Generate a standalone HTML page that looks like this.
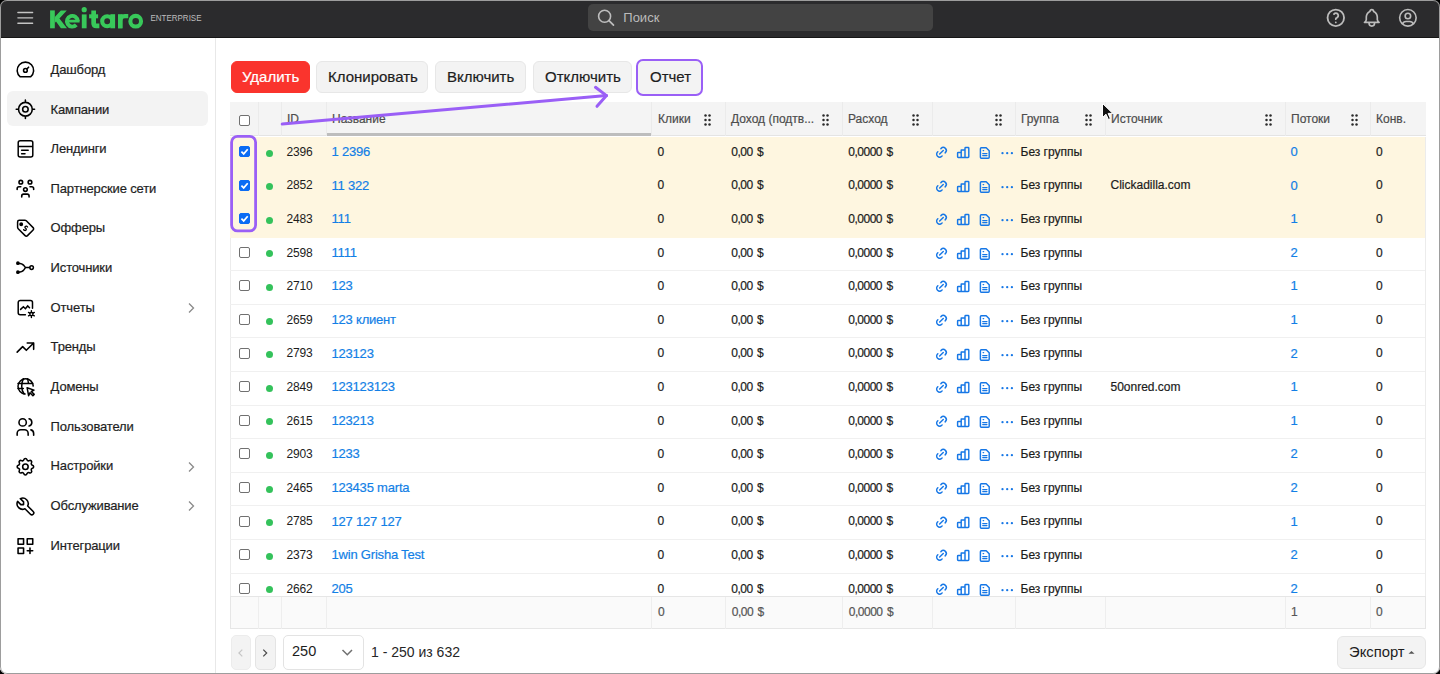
<!DOCTYPE html><html><head><meta charset="utf-8"><style>
*{box-sizing:border-box;margin:0;padding:0}
html,body{width:1440px;height:674px;overflow:hidden;background:#000;font-family:"Liberation Sans",sans-serif;color:#202020}
.mi span,.c,.th,.btn{-webkit-text-stroke:0.2px currentColor}
#win{position:absolute;left:0;top:0;width:1440px;height:674px;border-radius:7px;overflow:hidden;background:#fff}
#frame{position:absolute;left:0;top:0;width:1440px;height:674px;border:1px solid #9d9d9d;border-radius:7px}
.a{position:absolute;white-space:nowrap}
#hdr{position:absolute;left:0;top:0;width:1440px;height:37.5px;background:#2b2b2d;border-bottom:1px solid #161616}
#side{position:absolute;left:0;top:37.5px;width:216px;height:640px;background:#fff;border-right:1px solid #e8e8e8}
.mi{position:absolute;left:7.3px;width:201px;height:35.2px;border-radius:6px}
.mi.act{background:#f3f3f3}
.mi span{position:absolute;left:43.3px;top:10.4px;font-size:13px;line-height:16px;color:#1f1f1f;letter-spacing:-0.15px}
.btn{position:absolute;top:61px;height:32.4px;border-radius:6px;background:#f3f3f3;border:1px solid #e7e7e7;font-size:15px;line-height:30px;color:#1d1d1d;padding-left:11px}
.th{position:absolute;top:-0.5px;height:34px;font-size:12px;line-height:34px;color:#4d4d4d;padding-left:6px}
.row{position:absolute;left:0;width:1195px;height:33.6px;border-bottom:1px solid #f0f0f0}
.row.sel{background:#fef6e0;border-bottom-color:#fef6e0}
.c{position:absolute;top:-1.1px;height:33px;line-height:33px;font-size:12px;color:#1c1c1c;padding-left:5.5px;white-space:nowrap}
.lnk{color:#137fe6;font-size:13px;letter-spacing:-0.2px;top:-1.9px}
.dot{position:absolute;left:36px;top:12.9px;width:7px;height:7px;border-radius:50%;background:#34c25b}
.cb{position:absolute;left:9px;top:9.2px;width:11px;height:11px;border:1px solid #707070;border-radius:2px;background:#fff}
.cb.on{background:#0b6cf4;border-color:#0b6cf4}
.hd{position:absolute;width:8px;height:12px}
</style></head><body><div id="win">
<div id="hdr">
<svg class="a" style="left:0;top:0" width="220" height="38" viewBox="0 0 220 38"><g stroke="#c4c4c4" stroke-width="1.45" stroke-linecap="round"><line x1="17.9" y1="12.5" x2="32.6" y2="12.5"/><line x1="17.9" y1="17.85" x2="32.6" y2="17.85"/><line x1="17.9" y1="23.2" x2="32.6" y2="23.2"/></g><g fill="#38c85a"><rect x="50.1" y="10.4" width="4.7" height="17.9"/><path d="M54.8 16.9L60.8 10.4H66.8L59.4 18.6L67 28.3H60.9L56 21.6L54.8 22.9Z"/><rect x="81.8" y="14.4" width="4.8" height="13.9"/><circle cx="84.2" cy="9.7" r="2.6"/><rect x="89.1" y="14.3" width="9" height="4"/><rect x="110.3" y="14.2" width="4.8" height="14.1"/><rect x="118" y="14.2" width="4.5" height="14.1"/></g><g fill="none" stroke="#38c85a"><path d="M77.7 21.1A5.4 5.4 0 1 0 76.3 24.9" stroke-width="3.9"/><path d="M67.5 21.2H79.6" stroke-width="2.7"/><path d="M93.65 10.4V23.3q0 2.6 2.6 2.6h3.1" stroke-width="4.7"/><circle cx="107.2" cy="21.2" r="5" stroke-width="4.1"/><path d="M120.25 28.3V20.8q0-4.6 4.6-4.6h3.4" stroke-width="4.3"/><circle cx="135.7" cy="21.2" r="5.35" stroke-width="4.1"/></g><text x="150.5" y="20.9" fill="#bdbdbd" font-family="Liberation Sans" font-size="9" textLength="51" lengthAdjust="spacingAndGlyphs">ENTERPRISE</text></svg>
<div class="a" style="left:587.5px;top:4px;width:345px;height:27.2px;background:#434343;border-radius:5px"></div>
<svg class="a" style="left:596px;top:7px" width="22" height="22" viewBox="0 0 22 22"><circle cx="8.6" cy="9.3" r="6" fill="none" stroke="#bdbdbd" stroke-width="1.6"/><line x1="13" y1="13.7" x2="17.5" y2="18.2" stroke="#bdbdbd" stroke-width="1.7" stroke-linecap="round"/></svg>
<div class="a" style="left:623.3px;top:10px;font-size:13px;line-height:16px;color:#bbbbbb">Поиск</div>
<svg class="a" style="left:1320px;top:0" width="110" height="38" viewBox="1320 0 110 38" fill="none" stroke="#bcbcbc" stroke-linecap="round" stroke-linejoin="round"><g transform="translate(1324.8 6.8) scale(0.9167)" stroke-width="1.8"><path d="M12 12m-9 0a9 9 0 1 0 18 0a9 9 0 1 0 -18 0 M12 17v.01 M12 13.5a1.5 1.5 0 0 1 1 -1.5a2.6 2.6 0 1 0 -3 -4" stroke-width="2"/></g><g transform="translate(1360.8 6.8) scale(0.9167)" stroke-width="1.8"><path d="M10 5a2 2 0 1 1 4 0a7 7 0 0 1 4 6v3a4 4 0 0 0 2 3h-16a4 4 0 0 0 2 -3v-3a7 7 0 0 1 4 -6 M9 17v1a3 3 0 0 0 6 0v-1"/></g><g transform="translate(1396.9 6.8) scale(0.9167)" stroke-width="1.8"><path d="M12 12m-9 0a9 9 0 1 0 18 0a9 9 0 1 0 -18 0 M12 10m-3 0a3 3 0 1 0 6 0a3 3 0 1 0 -6 0 M6.168 18.849a4 4 0 0 1 3.832 -2.849h4a4 4 0 0 1 3.821 2.824"/></g></svg>
</div>
<div id="side">
<div class="mi" style="top:14.00px"><span>Дашборд</span>
<svg class="a" style="left:-7.3px;top:-51.50px;overflow:visible" width="1" height="1" fill="none" stroke="#000" stroke-linecap="round"><g transform="translate(14.4 58.50) scale(0.9167)" stroke-width="1.72" stroke-linejoin="round"><path d="M12 13m-2 0a2 2 0 1 0 4 0a2 2 0 1 0 -4 0 M13.45 11.55l2.05 -2.05 M6.4 20a9 9 0 1 1 11.2 0z"/></g></svg>
</div>
<div class="mi act" style="top:53.65px"><span>Кампании</span>
<svg class="a" style="left:-7.3px;top:-91.15px;overflow:visible" width="1" height="1" fill="none" stroke="#000" stroke-linecap="round"><g transform="translate(14.4 98.22) scale(0.9167)" stroke-width="1.72" stroke-linejoin="round"><path d="M12 12m-3 0a3 3 0 1 0 6 0a3 3 0 1 0 -6 0 M12 12m-7.5 0a7.5 7.5 0 1 0 15 0a7.5 7.5 0 1 0 -15 0 M12 2l0 2 M12 20l0 2 M20 12l2 0 M2 12l2 0"/></g></svg>
</div>
<div class="mi" style="top:93.30px"><span>Лендинги</span>
<svg class="a" style="left:4.7px;top:5.20px" width="28" height="24" viewBox="0 0 28 24" fill="none" stroke="#000" stroke-width="1.5" stroke-linecap="round"><rect x="6.2" y="4.8" width="14.6" height="16.2" rx="2"/><path d="M6.9 10.5h13.2M9.6 14.2h6.6M9.6 17.7h3.4"/></svg>
</div>
<div class="mi" style="top:132.95px"><span>Партнерские сети</span>
<svg class="a" style="left:-7.3px;top:-170.45px;overflow:visible" width="1" height="1" fill="none" stroke="#000" stroke-linecap="round"><g transform="translate(14.4 177.66) scale(0.9167)" stroke-width="1.72" stroke-linejoin="round"><path d="M10 13a2 2 0 1 0 4 0a2 2 0 0 0 -4 0 M8 21v-1a2 2 0 0 1 2 -2h4a2 2 0 0 1 2 2v1 M15 5a2 2 0 1 0 4 0a2 2 0 0 0 -4 0 M17 10h2a2 2 0 0 1 2 2v1 M5 5a2 2 0 1 0 4 0a2 2 0 0 0 -4 0 M3 13v-1a2 2 0 0 1 2 -2h2"/></g></svg>
</div>
<div class="mi" style="top:172.60px"><span>Офферы</span>
<svg class="a" style="left:4.7px;top:5.90px" width="28" height="24" viewBox="0 0 28 24" fill="none" stroke="#000" stroke-width="1.5" stroke-linecap="round"><path d="M5.6 5.9c0-1 .7-1.7 1.7-1.7h5.6c.6 0 1 .2 1.4.6l6.8 6.8c.7.7.7 1.7 0 2.4l-5.6 5.6c-.7.7-1.7.7-2.4 0L6.2 12.7c-.4-.4-.6-.9-.6-1.4z" stroke-linejoin="round"/><circle cx="9.2" cy="8.3" r="1.2" fill="#000"/><path d="M15.6 11.0c-.5-.9-1.6-1.2-2.3-.6-.7.6-.4 1.4.3 1.9.7.5 1 1.3.3 1.9-.7.6-1.8.3-2.3-.6" stroke-width="1.3"/></svg>
</div>
<div class="mi" style="top:212.25px"><span>Источники</span>
<svg class="a" style="left:4.7px;top:5.25px" width="28" height="24" viewBox="0 0 28 24" fill="none" stroke="#000" stroke-width="1.5" stroke-linecap="round"><circle cx="5.9" cy="8.2" r="1.1" fill="#000"/><circle cx="5.9" cy="17.2" r="1.1" fill="#000"/><path d="M5.9 8.2c3 0 4.6.3 6 2.3l1.6 2.1M5.9 17.2c3 0 4.6-.3 6-2.3l1.6-2.3h4.2"/><circle cx="19.6" cy="12.6" r="1.8"/></svg>
</div>
<div class="mi" style="top:251.90px"><span>Отчеты</span>
<svg class="a" style="left:4.7px;top:5.60px" width="28" height="24" viewBox="0 0 28 24" fill="none" stroke="#000" stroke-width="1.5" stroke-linecap="round"><path d="M13.4 19.8H8.2c-1.1 0-2-.9-2-2V7.5c0-1.1.9-2 2-2h10.3c1.1 0 2 .9 2 2v5.7"/><path d="M8.6 14.4l2.8-2.6 2 1.9 2.3-2.8 1.8 1.8"/><g stroke-width="1.4"><path d="M19.4 15.7v6.8M16.5 17.4l5.8 3.4M16.5 20.8l5.8-3.4"/></g><circle cx="19.4" cy="19.1" r="1.6" fill="#fff" stroke-width="1.4"/></svg>
<svg class="a" style="left:177.7px;top:11.7px" width="12" height="14" viewBox="0 0 12 14"><path d="M4 2.5l4.5 4.5L4 11.5" fill="none" stroke="#8a8a8a" stroke-width="1.3"/></svg>
</div>
<div class="mi" style="top:291.55px"><span>Тренды</span>
<svg class="a" style="left:-7.3px;top:-329.05px;overflow:visible" width="1" height="1" fill="none" stroke="#000" stroke-linecap="round"><g transform="translate(14.4 336.54) scale(0.9167)" stroke-width="1.72" stroke-linejoin="round"><path d="M3 17l6 -6l4 4l8 -8 M14 7l7 0l0 7"/></g></svg>
</div>
<div class="mi" style="top:331.20px"><span>Домены</span>
<svg class="a" style="left:4.7px;top:5.30px" width="28" height="24" viewBox="0 0 28 24" fill="none" stroke="#000" stroke-width="1.5" stroke-linecap="round"><g transform="translate(0.8 0)"><path d="M12.3 20A7.6 7.6 0 1 1 20.4 12.1"/><path d="M5.2 9.5h14.6M5.2 14.6h5.3M10.8 4.7c-1.3 2.1-1.9 4.5-1.9 7.5 0 3.3.9 5.8 2.4 7.8M14.5 4.7c.6 1 1 2.8 1.2 4.8"/><path d="M14.3 13.7l6.9 2.4-2.7 1.4 2.9 2.9-1.3 1.3-2.9-2.9-1.4 2.9z" stroke-linejoin="round"/></g></svg>
</div>
<div class="mi" style="top:370.85px"><span>Пользователи</span>
<svg class="a" style="left:-7.3px;top:-408.35px;overflow:visible" width="1" height="1" fill="none" stroke="#000" stroke-linecap="round"><g transform="translate(14.4 415.98) scale(0.9167)" stroke-width="1.72" stroke-linejoin="round"><path d="M9 7m-4 0a4 4 0 1 0 8 0a4 4 0 1 0 -8 0 M3 21v-2a4 4 0 0 1 4 -4h4a4 4 0 0 1 4 4v2 M16 3.13a4 4 0 0 1 0 7.75 M21 21v-2a4 4 0 0 0 -3 -3.85"/></g></svg>
</div>
<div class="mi" style="top:410.50px"><span>Настройки</span>
<svg class="a" style="left:-7.3px;top:-448.00px;overflow:visible" width="1" height="1" fill="none" stroke="#000" stroke-linecap="round"><g transform="translate(14.4 455.70) scale(0.9167)" stroke-width="1.72" stroke-linejoin="round"><path d="M10.325 4.317c.426 -1.756 2.924 -1.756 3.35 0a1.724 1.724 0 0 0 2.573 1.066c1.543 -.94 3.31 .826 2.37 2.37a1.724 1.724 0 0 0 1.065 2.572c1.756 .426 1.756 2.924 0 3.35a1.724 1.724 0 0 0 -1.066 2.573c.94 1.543 -.826 3.31 -2.37 2.37a1.724 1.724 0 0 0 -2.572 1.065c-.426 1.756 -2.924 1.756 -3.35 0a1.724 1.724 0 0 0 -2.573 -1.066c-1.543 .94 -3.31 -.826 -2.37 -2.37a1.724 1.724 0 0 0 -1.065 -2.572c-1.756 -.426 -1.756 -2.924 0 -3.35a1.724 1.724 0 0 0 1.066 -2.573c-.94 -1.543 .826 -3.31 2.37 -2.37c1 .608 2.296 .07 2.572 -1.065z M9 12a3 3 0 1 0 6 0a3 3 0 0 0 -6 0"/></g></svg>
<svg class="a" style="left:177.7px;top:11.7px" width="12" height="14" viewBox="0 0 12 14"><path d="M4 2.5l4.5 4.5L4 11.5" fill="none" stroke="#8a8a8a" stroke-width="1.3"/></svg>
</div>
<div class="mi" style="top:450.15px"><span>Обслуживание</span>
<svg class="a" style="left:-7.3px;top:-487.65px;overflow:visible" width="1" height="1" fill="none" stroke="#000" stroke-linecap="round"><g transform="translate(14.4 495.42) scale(0.9167)" stroke-width="1.72" stroke-linejoin="round"><path d="M7 10h3v-3l-3.5 -3.5a6 6 0 0 1 8 8l6 6a2 2 0 0 1 -3 3l-6 -6a6 6 0 0 1 -8 -8l3.5 3.5"/></g></svg>
<svg class="a" style="left:177.7px;top:11.7px" width="12" height="14" viewBox="0 0 12 14"><path d="M4 2.5l4.5 4.5L4 11.5" fill="none" stroke="#8a8a8a" stroke-width="1.3"/></svg>
</div>
<div class="mi" style="top:489.80px"><span>Интеграции</span>
<svg class="a" style="left:-7.3px;top:-527.30px;overflow:visible" width="1" height="1" fill="none" stroke="#000" stroke-linecap="round"><g transform="translate(14.4 535.14) scale(0.9167)" stroke-width="1.72" stroke-linejoin="round"><path d="M4 4h6v6h-6z M14 4h6v6h-6z M4 14h6v6h-6z M14 17h6m-3 -3v6"/></g></svg>
</div>
</div>
<div class="btn" style="left:230.5px;width:79px;background:#fa342d;border-color:#fa342d;color:#fff;padding-left:10.5px">Удалить</div>
<div class="btn" style="left:316px;width:112px">Клонировать</div>
<div class="btn" style="left:435px;width:91px">Включить</div>
<div class="btn" style="left:533px;width:99px">Отключить</div>
<div class="btn" style="left:636px;top:59px;width:67px;height:37px;border:2.7px solid #9a5ff6;border-radius:7px;padding-left:12px;line-height:32px">Отчет</div>
<div class="a" style="left:230px;top:102px;width:1196px;height:527px;overflow:hidden">
<div class="a" style="left:0;top:0;width:1196px;height:34px;background:#f4f4f4;border-bottom:1px solid #e4e4e4">
<div class="a" style="left:28px;top:0;width:1px;height:34px;background:#ebebeb"></div>
<div class="a" style="left:51px;top:0;width:1px;height:34px;background:#ebebeb"></div>
<div class="a" style="left:96px;top:0;width:1px;height:34px;background:#ebebeb"></div>
<div class="a" style="left:421px;top:0;width:1px;height:34px;background:#ebebeb"></div>
<div class="a" style="left:495px;top:0;width:1px;height:34px;background:#ebebeb"></div>
<div class="a" style="left:612px;top:0;width:1px;height:34px;background:#ebebeb"></div>
<div class="a" style="left:702px;top:0;width:1px;height:34px;background:#ebebeb"></div>
<div class="a" style="left:785px;top:0;width:1px;height:34px;background:#ebebeb"></div>
<div class="a" style="left:875px;top:0;width:1px;height:34px;background:#ebebeb"></div>
<div class="a" style="left:1055px;top:0;width:1px;height:34px;background:#ebebeb"></div>
<div class="a" style="left:1140px;top:0;width:1px;height:34px;background:#ebebeb"></div>
<div class="a" style="left:96.5px;top:31px;width:324.5px;height:3px;background:#bdbdbd"></div>
<div class="th" style="left:51px">ID</div>
<div class="th" style="left:96px">Название</div>
<div class="th" style="left:422px">Клики</div>
<svg class="hd" style="left:474px;top:12px" viewBox="0 0 8 12" fill="#2a2a2a"><circle cx="1.5" cy="1.6" r="1.25"/><circle cx="1.5" cy="6" r="1.25"/><circle cx="1.5" cy="10.4" r="1.25"/><circle cx="5.5" cy="1.6" r="1.25"/><circle cx="5.5" cy="6" r="1.25"/><circle cx="5.5" cy="10.4" r="1.25"/></svg>
<div class="th" style="left:495px">Доход (подтв...</div>
<svg class="hd" style="left:592px;top:12px" viewBox="0 0 8 12" fill="#2a2a2a"><circle cx="1.5" cy="1.6" r="1.25"/><circle cx="1.5" cy="6" r="1.25"/><circle cx="1.5" cy="10.4" r="1.25"/><circle cx="5.5" cy="1.6" r="1.25"/><circle cx="5.5" cy="6" r="1.25"/><circle cx="5.5" cy="10.4" r="1.25"/></svg>
<div class="th" style="left:612px">Расход</div>
<svg class="hd" style="left:682px;top:12px" viewBox="0 0 8 12" fill="#2a2a2a"><circle cx="1.5" cy="1.6" r="1.25"/><circle cx="1.5" cy="6" r="1.25"/><circle cx="1.5" cy="10.4" r="1.25"/><circle cx="5.5" cy="1.6" r="1.25"/><circle cx="5.5" cy="6" r="1.25"/><circle cx="5.5" cy="10.4" r="1.25"/></svg>
<svg class="hd" style="left:765px;top:12px" viewBox="0 0 8 12" fill="#2a2a2a"><circle cx="1.5" cy="1.6" r="1.25"/><circle cx="1.5" cy="6" r="1.25"/><circle cx="1.5" cy="10.4" r="1.25"/><circle cx="5.5" cy="1.6" r="1.25"/><circle cx="5.5" cy="6" r="1.25"/><circle cx="5.5" cy="10.4" r="1.25"/></svg>
<div class="th" style="left:785px">Группа</div>
<svg class="hd" style="left:855px;top:12px" viewBox="0 0 8 12" fill="#2a2a2a"><circle cx="1.5" cy="1.6" r="1.25"/><circle cx="1.5" cy="6" r="1.25"/><circle cx="1.5" cy="10.4" r="1.25"/><circle cx="5.5" cy="1.6" r="1.25"/><circle cx="5.5" cy="6" r="1.25"/><circle cx="5.5" cy="10.4" r="1.25"/></svg>
<div class="th" style="left:875px">Источник</div>
<svg class="hd" style="left:1035px;top:12px" viewBox="0 0 8 12" fill="#2a2a2a"><circle cx="1.5" cy="1.6" r="1.25"/><circle cx="1.5" cy="6" r="1.25"/><circle cx="1.5" cy="10.4" r="1.25"/><circle cx="5.5" cy="1.6" r="1.25"/><circle cx="5.5" cy="6" r="1.25"/><circle cx="5.5" cy="10.4" r="1.25"/></svg>
<div class="th" style="left:1055px">Потоки</div>
<svg class="hd" style="left:1121px;top:12px" viewBox="0 0 8 12" fill="#2a2a2a"><circle cx="1.5" cy="1.6" r="1.25"/><circle cx="1.5" cy="6" r="1.25"/><circle cx="1.5" cy="10.4" r="1.25"/><circle cx="5.5" cy="1.6" r="1.25"/><circle cx="5.5" cy="6" r="1.25"/><circle cx="5.5" cy="10.4" r="1.25"/></svg>
<div class="th" style="left:1140px">Конв.</div>
<div class="cb" style="top:13px"></div>
</div>
<div class="a" style="left:0;top:34.8px;width:1px;height:459.2px;background:#ececec"></div><div class="a" style="left:1195px;top:34.8px;width:1px;height:459.2px;background:#ececec"></div>
<div class="a" style="left:0;top:34.8px;width:1196px;height:459.2px;overflow:hidden">
<div class="row sel" style="top:0.00px">
<div class="cb on"><svg width="11" height="11" viewBox="0 0 11 11" style="position:absolute;left:-1px;top:-1px"><path d="M2.4 5.6l2.3 2.3 4-4.6" fill="none" stroke="#fff" stroke-width="1.7"/></svg></div>
<div class="dot"></div>
<div class="c" style="left:51px;letter-spacing:-0.15px;-webkit-text-stroke:0">2396</div>
<div class="c lnk" style="left:96px">1 2396</div>
<div class="c" style="left:422px">0</div>
<div class="c" style="left:495.8px;letter-spacing:-0.5px;word-spacing:1.6px">0,00 $</div>
<div class="c" style="left:612.8px;letter-spacing:-0.5px;word-spacing:1.6px">0,0000 $</div>
<svg class="a" style="left:702px;top:6.2px" width="84" height="20" viewBox="932 143 84 20" fill="none" stroke="#1677e6" stroke-width="1.45" stroke-linecap="round" stroke-linejoin="round"><g transform="translate(934.25 145.1) scale(0.6)" stroke-width="2.4"><path d="M9 15l6-6M11 6l.463-.536a5 5 0 0 1 7.071 7.072l-.534.464M13 18l-.397.534a5.068 5.068 0 0 1-7.127 0a4.972 4.972 0 0 1 0-7.071l.524-.463"/></g><path d="M958.3 152.4h2.9v5h-2.9a.7.7 0 0 1-.7-.7v-3.6a.7.7 0 0 1 .7-.7z M961.2 157.4v-7.4h3.8v7.4z M965 157.4v-9.2a.7.7 0 0 1 .7-.7h2.4a.7.7 0 0 1 .7.7v8.5a.7.7 0 0 1-.7.7z"/><path d="M981.3 147.8h4.9l3 3v6.5a.9.9 0 0 1-.9.9h-7a.9.9 0 0 1-.9-.9v-8.6a.9.9 0 0 1 .9-.9z M982.8 153.6h4.1M982.8 155.6h4.1M983.2 150.6h.4"/></svg><svg class="a" style="left:768px;top:14.2px" width="16" height="4" viewBox="0 0 16 4" fill="#1677e6"><circle cx="4.5" cy="2.2" r="1.15"/><circle cx="9.2" cy="2.2" r="1.15"/><circle cx="13.9" cy="2.2" r="1.15"/></svg>
<div class="c" style="left:785px">Без группы</div>
<div class="c lnk" style="left:1055px">0</div>
<div class="c" style="left:1140.5px">0</div>
</div>
<div class="row sel" style="top:33.60px">
<div class="cb on"><svg width="11" height="11" viewBox="0 0 11 11" style="position:absolute;left:-1px;top:-1px"><path d="M2.4 5.6l2.3 2.3 4-4.6" fill="none" stroke="#fff" stroke-width="1.7"/></svg></div>
<div class="dot"></div>
<div class="c" style="left:51px;letter-spacing:-0.15px;-webkit-text-stroke:0">2852</div>
<div class="c lnk" style="left:96px">11 322</div>
<div class="c" style="left:422px">0</div>
<div class="c" style="left:495.8px;letter-spacing:-0.5px;word-spacing:1.6px">0,00 $</div>
<div class="c" style="left:612.8px;letter-spacing:-0.5px;word-spacing:1.6px">0,0000 $</div>
<svg class="a" style="left:702px;top:6.2px" width="84" height="20" viewBox="932 143 84 20" fill="none" stroke="#1677e6" stroke-width="1.45" stroke-linecap="round" stroke-linejoin="round"><g transform="translate(934.25 145.1) scale(0.6)" stroke-width="2.4"><path d="M9 15l6-6M11 6l.463-.536a5 5 0 0 1 7.071 7.072l-.534.464M13 18l-.397.534a5.068 5.068 0 0 1-7.127 0a4.972 4.972 0 0 1 0-7.071l.524-.463"/></g><path d="M958.3 152.4h2.9v5h-2.9a.7.7 0 0 1-.7-.7v-3.6a.7.7 0 0 1 .7-.7z M961.2 157.4v-7.4h3.8v7.4z M965 157.4v-9.2a.7.7 0 0 1 .7-.7h2.4a.7.7 0 0 1 .7.7v8.5a.7.7 0 0 1-.7.7z"/><path d="M981.3 147.8h4.9l3 3v6.5a.9.9 0 0 1-.9.9h-7a.9.9 0 0 1-.9-.9v-8.6a.9.9 0 0 1 .9-.9z M982.8 153.6h4.1M982.8 155.6h4.1M983.2 150.6h.4"/></svg><svg class="a" style="left:768px;top:14.2px" width="16" height="4" viewBox="0 0 16 4" fill="#1677e6"><circle cx="4.5" cy="2.2" r="1.15"/><circle cx="9.2" cy="2.2" r="1.15"/><circle cx="13.9" cy="2.2" r="1.15"/></svg>
<div class="c" style="left:785px">Без группы</div>
<div class="c" style="left:875px">Clickadilla.com</div>
<div class="c lnk" style="left:1055px">0</div>
<div class="c" style="left:1140.5px">0</div>
</div>
<div class="row sel" style="top:67.20px">
<div class="cb on"><svg width="11" height="11" viewBox="0 0 11 11" style="position:absolute;left:-1px;top:-1px"><path d="M2.4 5.6l2.3 2.3 4-4.6" fill="none" stroke="#fff" stroke-width="1.7"/></svg></div>
<div class="dot"></div>
<div class="c" style="left:51px;letter-spacing:-0.15px;-webkit-text-stroke:0">2483</div>
<div class="c lnk" style="left:96px">111</div>
<div class="c" style="left:422px">0</div>
<div class="c" style="left:495.8px;letter-spacing:-0.5px;word-spacing:1.6px">0,00 $</div>
<div class="c" style="left:612.8px;letter-spacing:-0.5px;word-spacing:1.6px">0,0000 $</div>
<svg class="a" style="left:702px;top:6.2px" width="84" height="20" viewBox="932 143 84 20" fill="none" stroke="#1677e6" stroke-width="1.45" stroke-linecap="round" stroke-linejoin="round"><g transform="translate(934.25 145.1) scale(0.6)" stroke-width="2.4"><path d="M9 15l6-6M11 6l.463-.536a5 5 0 0 1 7.071 7.072l-.534.464M13 18l-.397.534a5.068 5.068 0 0 1-7.127 0a4.972 4.972 0 0 1 0-7.071l.524-.463"/></g><path d="M958.3 152.4h2.9v5h-2.9a.7.7 0 0 1-.7-.7v-3.6a.7.7 0 0 1 .7-.7z M961.2 157.4v-7.4h3.8v7.4z M965 157.4v-9.2a.7.7 0 0 1 .7-.7h2.4a.7.7 0 0 1 .7.7v8.5a.7.7 0 0 1-.7.7z"/><path d="M981.3 147.8h4.9l3 3v6.5a.9.9 0 0 1-.9.9h-7a.9.9 0 0 1-.9-.9v-8.6a.9.9 0 0 1 .9-.9z M982.8 153.6h4.1M982.8 155.6h4.1M983.2 150.6h.4"/></svg><svg class="a" style="left:768px;top:14.2px" width="16" height="4" viewBox="0 0 16 4" fill="#1677e6"><circle cx="4.5" cy="2.2" r="1.15"/><circle cx="9.2" cy="2.2" r="1.15"/><circle cx="13.9" cy="2.2" r="1.15"/></svg>
<div class="c" style="left:785px">Без группы</div>
<div class="c lnk" style="left:1055px">1</div>
<div class="c" style="left:1140.5px">0</div>
</div>
<div class="row" style="top:100.80px">
<div class="cb"></div>
<div class="dot"></div>
<div class="c" style="left:51px;letter-spacing:-0.15px;-webkit-text-stroke:0">2598</div>
<div class="c lnk" style="left:96px">1111</div>
<div class="c" style="left:422px">0</div>
<div class="c" style="left:495.8px;letter-spacing:-0.5px;word-spacing:1.6px">0,00 $</div>
<div class="c" style="left:612.8px;letter-spacing:-0.5px;word-spacing:1.6px">0,0000 $</div>
<svg class="a" style="left:702px;top:6.2px" width="84" height="20" viewBox="932 143 84 20" fill="none" stroke="#1677e6" stroke-width="1.45" stroke-linecap="round" stroke-linejoin="round"><g transform="translate(934.25 145.1) scale(0.6)" stroke-width="2.4"><path d="M9 15l6-6M11 6l.463-.536a5 5 0 0 1 7.071 7.072l-.534.464M13 18l-.397.534a5.068 5.068 0 0 1-7.127 0a4.972 4.972 0 0 1 0-7.071l.524-.463"/></g><path d="M958.3 152.4h2.9v5h-2.9a.7.7 0 0 1-.7-.7v-3.6a.7.7 0 0 1 .7-.7z M961.2 157.4v-7.4h3.8v7.4z M965 157.4v-9.2a.7.7 0 0 1 .7-.7h2.4a.7.7 0 0 1 .7.7v8.5a.7.7 0 0 1-.7.7z"/><path d="M981.3 147.8h4.9l3 3v6.5a.9.9 0 0 1-.9.9h-7a.9.9 0 0 1-.9-.9v-8.6a.9.9 0 0 1 .9-.9z M982.8 153.6h4.1M982.8 155.6h4.1M983.2 150.6h.4"/></svg><svg class="a" style="left:768px;top:14.2px" width="16" height="4" viewBox="0 0 16 4" fill="#1677e6"><circle cx="4.5" cy="2.2" r="1.15"/><circle cx="9.2" cy="2.2" r="1.15"/><circle cx="13.9" cy="2.2" r="1.15"/></svg>
<div class="c" style="left:785px">Без группы</div>
<div class="c lnk" style="left:1055px">2</div>
<div class="c" style="left:1140.5px">0</div>
</div>
<div class="row" style="top:134.40px">
<div class="cb"></div>
<div class="dot"></div>
<div class="c" style="left:51px;letter-spacing:-0.15px;-webkit-text-stroke:0">2710</div>
<div class="c lnk" style="left:96px">123</div>
<div class="c" style="left:422px">0</div>
<div class="c" style="left:495.8px;letter-spacing:-0.5px;word-spacing:1.6px">0,00 $</div>
<div class="c" style="left:612.8px;letter-spacing:-0.5px;word-spacing:1.6px">0,0000 $</div>
<svg class="a" style="left:702px;top:6.2px" width="84" height="20" viewBox="932 143 84 20" fill="none" stroke="#1677e6" stroke-width="1.45" stroke-linecap="round" stroke-linejoin="round"><g transform="translate(934.25 145.1) scale(0.6)" stroke-width="2.4"><path d="M9 15l6-6M11 6l.463-.536a5 5 0 0 1 7.071 7.072l-.534.464M13 18l-.397.534a5.068 5.068 0 0 1-7.127 0a4.972 4.972 0 0 1 0-7.071l.524-.463"/></g><path d="M958.3 152.4h2.9v5h-2.9a.7.7 0 0 1-.7-.7v-3.6a.7.7 0 0 1 .7-.7z M961.2 157.4v-7.4h3.8v7.4z M965 157.4v-9.2a.7.7 0 0 1 .7-.7h2.4a.7.7 0 0 1 .7.7v8.5a.7.7 0 0 1-.7.7z"/><path d="M981.3 147.8h4.9l3 3v6.5a.9.9 0 0 1-.9.9h-7a.9.9 0 0 1-.9-.9v-8.6a.9.9 0 0 1 .9-.9z M982.8 153.6h4.1M982.8 155.6h4.1M983.2 150.6h.4"/></svg><svg class="a" style="left:768px;top:14.2px" width="16" height="4" viewBox="0 0 16 4" fill="#1677e6"><circle cx="4.5" cy="2.2" r="1.15"/><circle cx="9.2" cy="2.2" r="1.15"/><circle cx="13.9" cy="2.2" r="1.15"/></svg>
<div class="c" style="left:785px">Без группы</div>
<div class="c lnk" style="left:1055px">1</div>
<div class="c" style="left:1140.5px">0</div>
</div>
<div class="row" style="top:168.00px">
<div class="cb"></div>
<div class="dot"></div>
<div class="c" style="left:51px;letter-spacing:-0.15px;-webkit-text-stroke:0">2659</div>
<div class="c lnk" style="left:96px">123 клиент</div>
<div class="c" style="left:422px">0</div>
<div class="c" style="left:495.8px;letter-spacing:-0.5px;word-spacing:1.6px">0,00 $</div>
<div class="c" style="left:612.8px;letter-spacing:-0.5px;word-spacing:1.6px">0,0000 $</div>
<svg class="a" style="left:702px;top:6.2px" width="84" height="20" viewBox="932 143 84 20" fill="none" stroke="#1677e6" stroke-width="1.45" stroke-linecap="round" stroke-linejoin="round"><g transform="translate(934.25 145.1) scale(0.6)" stroke-width="2.4"><path d="M9 15l6-6M11 6l.463-.536a5 5 0 0 1 7.071 7.072l-.534.464M13 18l-.397.534a5.068 5.068 0 0 1-7.127 0a4.972 4.972 0 0 1 0-7.071l.524-.463"/></g><path d="M958.3 152.4h2.9v5h-2.9a.7.7 0 0 1-.7-.7v-3.6a.7.7 0 0 1 .7-.7z M961.2 157.4v-7.4h3.8v7.4z M965 157.4v-9.2a.7.7 0 0 1 .7-.7h2.4a.7.7 0 0 1 .7.7v8.5a.7.7 0 0 1-.7.7z"/><path d="M981.3 147.8h4.9l3 3v6.5a.9.9 0 0 1-.9.9h-7a.9.9 0 0 1-.9-.9v-8.6a.9.9 0 0 1 .9-.9z M982.8 153.6h4.1M982.8 155.6h4.1M983.2 150.6h.4"/></svg><svg class="a" style="left:768px;top:14.2px" width="16" height="4" viewBox="0 0 16 4" fill="#1677e6"><circle cx="4.5" cy="2.2" r="1.15"/><circle cx="9.2" cy="2.2" r="1.15"/><circle cx="13.9" cy="2.2" r="1.15"/></svg>
<div class="c" style="left:785px">Без группы</div>
<div class="c lnk" style="left:1055px">1</div>
<div class="c" style="left:1140.5px">0</div>
</div>
<div class="row" style="top:201.60px">
<div class="cb"></div>
<div class="dot"></div>
<div class="c" style="left:51px;letter-spacing:-0.15px;-webkit-text-stroke:0">2793</div>
<div class="c lnk" style="left:96px">123123</div>
<div class="c" style="left:422px">0</div>
<div class="c" style="left:495.8px;letter-spacing:-0.5px;word-spacing:1.6px">0,00 $</div>
<div class="c" style="left:612.8px;letter-spacing:-0.5px;word-spacing:1.6px">0,0000 $</div>
<svg class="a" style="left:702px;top:6.2px" width="84" height="20" viewBox="932 143 84 20" fill="none" stroke="#1677e6" stroke-width="1.45" stroke-linecap="round" stroke-linejoin="round"><g transform="translate(934.25 145.1) scale(0.6)" stroke-width="2.4"><path d="M9 15l6-6M11 6l.463-.536a5 5 0 0 1 7.071 7.072l-.534.464M13 18l-.397.534a5.068 5.068 0 0 1-7.127 0a4.972 4.972 0 0 1 0-7.071l.524-.463"/></g><path d="M958.3 152.4h2.9v5h-2.9a.7.7 0 0 1-.7-.7v-3.6a.7.7 0 0 1 .7-.7z M961.2 157.4v-7.4h3.8v7.4z M965 157.4v-9.2a.7.7 0 0 1 .7-.7h2.4a.7.7 0 0 1 .7.7v8.5a.7.7 0 0 1-.7.7z"/><path d="M981.3 147.8h4.9l3 3v6.5a.9.9 0 0 1-.9.9h-7a.9.9 0 0 1-.9-.9v-8.6a.9.9 0 0 1 .9-.9z M982.8 153.6h4.1M982.8 155.6h4.1M983.2 150.6h.4"/></svg><svg class="a" style="left:768px;top:14.2px" width="16" height="4" viewBox="0 0 16 4" fill="#1677e6"><circle cx="4.5" cy="2.2" r="1.15"/><circle cx="9.2" cy="2.2" r="1.15"/><circle cx="13.9" cy="2.2" r="1.15"/></svg>
<div class="c" style="left:785px">Без группы</div>
<div class="c lnk" style="left:1055px">2</div>
<div class="c" style="left:1140.5px">0</div>
</div>
<div class="row" style="top:235.20px">
<div class="cb"></div>
<div class="dot"></div>
<div class="c" style="left:51px;letter-spacing:-0.15px;-webkit-text-stroke:0">2849</div>
<div class="c lnk" style="left:96px">123123123</div>
<div class="c" style="left:422px">0</div>
<div class="c" style="left:495.8px;letter-spacing:-0.5px;word-spacing:1.6px">0,00 $</div>
<div class="c" style="left:612.8px;letter-spacing:-0.5px;word-spacing:1.6px">0,0000 $</div>
<svg class="a" style="left:702px;top:6.2px" width="84" height="20" viewBox="932 143 84 20" fill="none" stroke="#1677e6" stroke-width="1.45" stroke-linecap="round" stroke-linejoin="round"><g transform="translate(934.25 145.1) scale(0.6)" stroke-width="2.4"><path d="M9 15l6-6M11 6l.463-.536a5 5 0 0 1 7.071 7.072l-.534.464M13 18l-.397.534a5.068 5.068 0 0 1-7.127 0a4.972 4.972 0 0 1 0-7.071l.524-.463"/></g><path d="M958.3 152.4h2.9v5h-2.9a.7.7 0 0 1-.7-.7v-3.6a.7.7 0 0 1 .7-.7z M961.2 157.4v-7.4h3.8v7.4z M965 157.4v-9.2a.7.7 0 0 1 .7-.7h2.4a.7.7 0 0 1 .7.7v8.5a.7.7 0 0 1-.7.7z"/><path d="M981.3 147.8h4.9l3 3v6.5a.9.9 0 0 1-.9.9h-7a.9.9 0 0 1-.9-.9v-8.6a.9.9 0 0 1 .9-.9z M982.8 153.6h4.1M982.8 155.6h4.1M983.2 150.6h.4"/></svg><svg class="a" style="left:768px;top:14.2px" width="16" height="4" viewBox="0 0 16 4" fill="#1677e6"><circle cx="4.5" cy="2.2" r="1.15"/><circle cx="9.2" cy="2.2" r="1.15"/><circle cx="13.9" cy="2.2" r="1.15"/></svg>
<div class="c" style="left:785px">Без группы</div>
<div class="c" style="left:875px">50onred.com</div>
<div class="c lnk" style="left:1055px">1</div>
<div class="c" style="left:1140.5px">0</div>
</div>
<div class="row" style="top:268.80px">
<div class="cb"></div>
<div class="dot"></div>
<div class="c" style="left:51px;letter-spacing:-0.15px;-webkit-text-stroke:0">2615</div>
<div class="c lnk" style="left:96px">123213</div>
<div class="c" style="left:422px">0</div>
<div class="c" style="left:495.8px;letter-spacing:-0.5px;word-spacing:1.6px">0,00 $</div>
<div class="c" style="left:612.8px;letter-spacing:-0.5px;word-spacing:1.6px">0,0000 $</div>
<svg class="a" style="left:702px;top:6.2px" width="84" height="20" viewBox="932 143 84 20" fill="none" stroke="#1677e6" stroke-width="1.45" stroke-linecap="round" stroke-linejoin="round"><g transform="translate(934.25 145.1) scale(0.6)" stroke-width="2.4"><path d="M9 15l6-6M11 6l.463-.536a5 5 0 0 1 7.071 7.072l-.534.464M13 18l-.397.534a5.068 5.068 0 0 1-7.127 0a4.972 4.972 0 0 1 0-7.071l.524-.463"/></g><path d="M958.3 152.4h2.9v5h-2.9a.7.7 0 0 1-.7-.7v-3.6a.7.7 0 0 1 .7-.7z M961.2 157.4v-7.4h3.8v7.4z M965 157.4v-9.2a.7.7 0 0 1 .7-.7h2.4a.7.7 0 0 1 .7.7v8.5a.7.7 0 0 1-.7.7z"/><path d="M981.3 147.8h4.9l3 3v6.5a.9.9 0 0 1-.9.9h-7a.9.9 0 0 1-.9-.9v-8.6a.9.9 0 0 1 .9-.9z M982.8 153.6h4.1M982.8 155.6h4.1M983.2 150.6h.4"/></svg><svg class="a" style="left:768px;top:14.2px" width="16" height="4" viewBox="0 0 16 4" fill="#1677e6"><circle cx="4.5" cy="2.2" r="1.15"/><circle cx="9.2" cy="2.2" r="1.15"/><circle cx="13.9" cy="2.2" r="1.15"/></svg>
<div class="c" style="left:785px">Без группы</div>
<div class="c lnk" style="left:1055px">1</div>
<div class="c" style="left:1140.5px">0</div>
</div>
<div class="row" style="top:302.40px">
<div class="cb"></div>
<div class="dot"></div>
<div class="c" style="left:51px;letter-spacing:-0.15px;-webkit-text-stroke:0">2903</div>
<div class="c lnk" style="left:96px">1233</div>
<div class="c" style="left:422px">0</div>
<div class="c" style="left:495.8px;letter-spacing:-0.5px;word-spacing:1.6px">0,00 $</div>
<div class="c" style="left:612.8px;letter-spacing:-0.5px;word-spacing:1.6px">0,0000 $</div>
<svg class="a" style="left:702px;top:6.2px" width="84" height="20" viewBox="932 143 84 20" fill="none" stroke="#1677e6" stroke-width="1.45" stroke-linecap="round" stroke-linejoin="round"><g transform="translate(934.25 145.1) scale(0.6)" stroke-width="2.4"><path d="M9 15l6-6M11 6l.463-.536a5 5 0 0 1 7.071 7.072l-.534.464M13 18l-.397.534a5.068 5.068 0 0 1-7.127 0a4.972 4.972 0 0 1 0-7.071l.524-.463"/></g><path d="M958.3 152.4h2.9v5h-2.9a.7.7 0 0 1-.7-.7v-3.6a.7.7 0 0 1 .7-.7z M961.2 157.4v-7.4h3.8v7.4z M965 157.4v-9.2a.7.7 0 0 1 .7-.7h2.4a.7.7 0 0 1 .7.7v8.5a.7.7 0 0 1-.7.7z"/><path d="M981.3 147.8h4.9l3 3v6.5a.9.9 0 0 1-.9.9h-7a.9.9 0 0 1-.9-.9v-8.6a.9.9 0 0 1 .9-.9z M982.8 153.6h4.1M982.8 155.6h4.1M983.2 150.6h.4"/></svg><svg class="a" style="left:768px;top:14.2px" width="16" height="4" viewBox="0 0 16 4" fill="#1677e6"><circle cx="4.5" cy="2.2" r="1.15"/><circle cx="9.2" cy="2.2" r="1.15"/><circle cx="13.9" cy="2.2" r="1.15"/></svg>
<div class="c" style="left:785px">Без группы</div>
<div class="c lnk" style="left:1055px">2</div>
<div class="c" style="left:1140.5px">0</div>
</div>
<div class="row" style="top:336.00px">
<div class="cb"></div>
<div class="dot"></div>
<div class="c" style="left:51px;letter-spacing:-0.15px;-webkit-text-stroke:0">2465</div>
<div class="c lnk" style="left:96px">123435 marta</div>
<div class="c" style="left:422px">0</div>
<div class="c" style="left:495.8px;letter-spacing:-0.5px;word-spacing:1.6px">0,00 $</div>
<div class="c" style="left:612.8px;letter-spacing:-0.5px;word-spacing:1.6px">0,0000 $</div>
<svg class="a" style="left:702px;top:6.2px" width="84" height="20" viewBox="932 143 84 20" fill="none" stroke="#1677e6" stroke-width="1.45" stroke-linecap="round" stroke-linejoin="round"><g transform="translate(934.25 145.1) scale(0.6)" stroke-width="2.4"><path d="M9 15l6-6M11 6l.463-.536a5 5 0 0 1 7.071 7.072l-.534.464M13 18l-.397.534a5.068 5.068 0 0 1-7.127 0a4.972 4.972 0 0 1 0-7.071l.524-.463"/></g><path d="M958.3 152.4h2.9v5h-2.9a.7.7 0 0 1-.7-.7v-3.6a.7.7 0 0 1 .7-.7z M961.2 157.4v-7.4h3.8v7.4z M965 157.4v-9.2a.7.7 0 0 1 .7-.7h2.4a.7.7 0 0 1 .7.7v8.5a.7.7 0 0 1-.7.7z"/><path d="M981.3 147.8h4.9l3 3v6.5a.9.9 0 0 1-.9.9h-7a.9.9 0 0 1-.9-.9v-8.6a.9.9 0 0 1 .9-.9z M982.8 153.6h4.1M982.8 155.6h4.1M983.2 150.6h.4"/></svg><svg class="a" style="left:768px;top:14.2px" width="16" height="4" viewBox="0 0 16 4" fill="#1677e6"><circle cx="4.5" cy="2.2" r="1.15"/><circle cx="9.2" cy="2.2" r="1.15"/><circle cx="13.9" cy="2.2" r="1.15"/></svg>
<div class="c" style="left:785px">Без группы</div>
<div class="c lnk" style="left:1055px">2</div>
<div class="c" style="left:1140.5px">0</div>
</div>
<div class="row" style="top:369.60px">
<div class="cb"></div>
<div class="dot"></div>
<div class="c" style="left:51px;letter-spacing:-0.15px;-webkit-text-stroke:0">2785</div>
<div class="c lnk" style="left:96px">127 127 127</div>
<div class="c" style="left:422px">0</div>
<div class="c" style="left:495.8px;letter-spacing:-0.5px;word-spacing:1.6px">0,00 $</div>
<div class="c" style="left:612.8px;letter-spacing:-0.5px;word-spacing:1.6px">0,0000 $</div>
<svg class="a" style="left:702px;top:6.2px" width="84" height="20" viewBox="932 143 84 20" fill="none" stroke="#1677e6" stroke-width="1.45" stroke-linecap="round" stroke-linejoin="round"><g transform="translate(934.25 145.1) scale(0.6)" stroke-width="2.4"><path d="M9 15l6-6M11 6l.463-.536a5 5 0 0 1 7.071 7.072l-.534.464M13 18l-.397.534a5.068 5.068 0 0 1-7.127 0a4.972 4.972 0 0 1 0-7.071l.524-.463"/></g><path d="M958.3 152.4h2.9v5h-2.9a.7.7 0 0 1-.7-.7v-3.6a.7.7 0 0 1 .7-.7z M961.2 157.4v-7.4h3.8v7.4z M965 157.4v-9.2a.7.7 0 0 1 .7-.7h2.4a.7.7 0 0 1 .7.7v8.5a.7.7 0 0 1-.7.7z"/><path d="M981.3 147.8h4.9l3 3v6.5a.9.9 0 0 1-.9.9h-7a.9.9 0 0 1-.9-.9v-8.6a.9.9 0 0 1 .9-.9z M982.8 153.6h4.1M982.8 155.6h4.1M983.2 150.6h.4"/></svg><svg class="a" style="left:768px;top:14.2px" width="16" height="4" viewBox="0 0 16 4" fill="#1677e6"><circle cx="4.5" cy="2.2" r="1.15"/><circle cx="9.2" cy="2.2" r="1.15"/><circle cx="13.9" cy="2.2" r="1.15"/></svg>
<div class="c" style="left:785px">Без группы</div>
<div class="c lnk" style="left:1055px">1</div>
<div class="c" style="left:1140.5px">0</div>
</div>
<div class="row" style="top:403.20px">
<div class="cb"></div>
<div class="dot"></div>
<div class="c" style="left:51px;letter-spacing:-0.15px;-webkit-text-stroke:0">2373</div>
<div class="c lnk" style="left:96px">1win Grisha Test</div>
<div class="c" style="left:422px">0</div>
<div class="c" style="left:495.8px;letter-spacing:-0.5px;word-spacing:1.6px">0,00 $</div>
<div class="c" style="left:612.8px;letter-spacing:-0.5px;word-spacing:1.6px">0,0000 $</div>
<svg class="a" style="left:702px;top:6.2px" width="84" height="20" viewBox="932 143 84 20" fill="none" stroke="#1677e6" stroke-width="1.45" stroke-linecap="round" stroke-linejoin="round"><g transform="translate(934.25 145.1) scale(0.6)" stroke-width="2.4"><path d="M9 15l6-6M11 6l.463-.536a5 5 0 0 1 7.071 7.072l-.534.464M13 18l-.397.534a5.068 5.068 0 0 1-7.127 0a4.972 4.972 0 0 1 0-7.071l.524-.463"/></g><path d="M958.3 152.4h2.9v5h-2.9a.7.7 0 0 1-.7-.7v-3.6a.7.7 0 0 1 .7-.7z M961.2 157.4v-7.4h3.8v7.4z M965 157.4v-9.2a.7.7 0 0 1 .7-.7h2.4a.7.7 0 0 1 .7.7v8.5a.7.7 0 0 1-.7.7z"/><path d="M981.3 147.8h4.9l3 3v6.5a.9.9 0 0 1-.9.9h-7a.9.9 0 0 1-.9-.9v-8.6a.9.9 0 0 1 .9-.9z M982.8 153.6h4.1M982.8 155.6h4.1M983.2 150.6h.4"/></svg><svg class="a" style="left:768px;top:14.2px" width="16" height="4" viewBox="0 0 16 4" fill="#1677e6"><circle cx="4.5" cy="2.2" r="1.15"/><circle cx="9.2" cy="2.2" r="1.15"/><circle cx="13.9" cy="2.2" r="1.15"/></svg>
<div class="c" style="left:785px">Без группы</div>
<div class="c lnk" style="left:1055px">2</div>
<div class="c" style="left:1140.5px">0</div>
</div>
<div class="row" style="top:436.80px">
<div class="cb"></div>
<div class="dot"></div>
<div class="c" style="left:51px;letter-spacing:-0.15px;-webkit-text-stroke:0">2662</div>
<div class="c lnk" style="left:96px">205</div>
<div class="c" style="left:422px">0</div>
<div class="c" style="left:495.8px;letter-spacing:-0.5px;word-spacing:1.6px">0,00 $</div>
<div class="c" style="left:612.8px;letter-spacing:-0.5px;word-spacing:1.6px">0,0000 $</div>
<svg class="a" style="left:702px;top:6.2px" width="84" height="20" viewBox="932 143 84 20" fill="none" stroke="#1677e6" stroke-width="1.45" stroke-linecap="round" stroke-linejoin="round"><g transform="translate(934.25 145.1) scale(0.6)" stroke-width="2.4"><path d="M9 15l6-6M11 6l.463-.536a5 5 0 0 1 7.071 7.072l-.534.464M13 18l-.397.534a5.068 5.068 0 0 1-7.127 0a4.972 4.972 0 0 1 0-7.071l.524-.463"/></g><path d="M958.3 152.4h2.9v5h-2.9a.7.7 0 0 1-.7-.7v-3.6a.7.7 0 0 1 .7-.7z M961.2 157.4v-7.4h3.8v7.4z M965 157.4v-9.2a.7.7 0 0 1 .7-.7h2.4a.7.7 0 0 1 .7.7v8.5a.7.7 0 0 1-.7.7z"/><path d="M981.3 147.8h4.9l3 3v6.5a.9.9 0 0 1-.9.9h-7a.9.9 0 0 1-.9-.9v-8.6a.9.9 0 0 1 .9-.9z M982.8 153.6h4.1M982.8 155.6h4.1M983.2 150.6h.4"/></svg><svg class="a" style="left:768px;top:14.2px" width="16" height="4" viewBox="0 0 16 4" fill="#1677e6"><circle cx="4.5" cy="2.2" r="1.15"/><circle cx="9.2" cy="2.2" r="1.15"/><circle cx="13.9" cy="2.2" r="1.15"/></svg>
<div class="c" style="left:785px">Без группы</div>
<div class="c lnk" style="left:1055px">2</div>
<div class="c" style="left:1140.5px">0</div>
</div>
</div>
<div class="a" style="left:0;top:494px;width:1196px;height:32.5px;background:#fafafa;border:1px solid #e6e6e6">
<div class="a" style="left:27px;top:0;width:1px;height:32px;background:#eeeeee"></div>
<div class="a" style="left:50px;top:0;width:1px;height:32px;background:#eeeeee"></div>
<div class="a" style="left:95px;top:0;width:1px;height:32px;background:#eeeeee"></div>
<div class="a" style="left:420px;top:0;width:1px;height:32px;background:#eeeeee"></div>
<div class="a" style="left:494px;top:0;width:1px;height:32px;background:#eeeeee"></div>
<div class="a" style="left:611px;top:0;width:1px;height:32px;background:#eeeeee"></div>
<div class="a" style="left:701px;top:0;width:1px;height:32px;background:#eeeeee"></div>
<div class="a" style="left:784px;top:0;width:1px;height:32px;background:#eeeeee"></div>
<div class="a" style="left:874px;top:0;width:1px;height:32px;background:#eeeeee"></div>
<div class="a" style="left:1054px;top:0;width:1px;height:32px;background:#eeeeee"></div>
<div class="a" style="left:1139px;top:0;width:1px;height:32px;background:#eeeeee"></div>
<div class="c" style="left:421.5px;top:0.2px;height:31px;line-height:31px;color:#555;">0</div>
<div class="c" style="left:495.3px;top:0.2px;height:31px;line-height:31px;color:#555;letter-spacing:-0.5px;word-spacing:1.6px;">0,00 $</div>
<div class="c" style="left:612.3px;top:0.2px;height:31px;line-height:31px;color:#555;letter-spacing:-0.5px;word-spacing:1.6px;">0,0000 $</div>
<div class="c" style="left:1054.5px;top:0.2px;height:31px;line-height:31px;color:#555;">1</div>
<div class="c" style="left:1139.5px;top:0.2px;height:31px;line-height:31px;color:#555;">0</div>
</div>
</div>
<div class="a" style="left:231px;top:635px;width:19.5px;height:35px;background:#f3f3f3;border:1px solid #ececec;border-radius:5px"></div>
<svg class="a" style="left:235px;top:647px" width="12" height="12" viewBox="0 0 12 12"><path d="M7.3 2.6L3.9 6l3.4 3.4" fill="none" stroke="#c6c6c6" stroke-width="1.2"/></svg>
<div class="a" style="left:255px;top:635px;width:20.5px;height:35px;background:#f3f3f3;border:1px solid #e4e4e4;border-radius:5px"></div>
<svg class="a" style="left:259px;top:647px" width="12" height="12" viewBox="0 0 12 12"><path d="M4.3 2.6L7.7 6l-3.4 3.4" fill="none" stroke="#4a4a4a" stroke-width="1.2"/></svg>
<div class="a" style="left:283px;top:635px;width:80.5px;height:35px;background:#fff;border:1px solid #e3e3e3;border-radius:5px"></div>
<div class="a" style="left:292px;top:643.4px;font-size:14.5px;line-height:17px;color:#1d1d1d">250</div>
<svg class="a" style="left:340px;top:646px" width="14" height="12" viewBox="0 0 14 12"><path d="M2.5 4l4.8 4.8L12 4" fill="none" stroke="#707070" stroke-width="1.5"/></svg>
<div class="a" style="left:371px;top:643.6px;font-size:14px;line-height:17px;color:#262626">1 - 250 из 632</div>
<div class="a" style="left:1337px;top:636px;width:88.5px;height:32.5px;background:#f3f3f3;border:1px solid #e6e6e6;border-radius:6px"></div>
<div class="a" style="left:1349px;top:644px;font-size:14.8px;line-height:17px;color:#1d1d1d">Экспорт</div>
<svg class="a" style="left:1407.5px;top:649.5px" width="7" height="5" viewBox="0 0 7 5"><path d="M0.5 3.8L3.5 1l3 2.8z" fill="#555"/></svg>
<svg class="a" style="left:0;top:0" width="1440" height="674" viewBox="0 0 1440 674" fill="none" stroke="#9a5ff6" stroke-width="3" stroke-linecap="round" stroke-linejoin="round"><path d="M282.2 124L606.5 95.6"/><path d="M595.5 87.3L606.5 95.6L597 106.3"/><rect x="231.6" y="136.3" width="24" height="94.6" rx="6" stroke-width="2.8"/></svg>
<svg class="a" style="left:1101px;top:102px" width="14" height="20" viewBox="0 0 14 20"><path d="M1.5 1.5v14l3.5-3.3 2.4 5.3 2-0.9-2.3-5.2h4.7z" fill="#111" stroke="#fff" stroke-width="1"/></svg>
<div id="frame"></div>
</div></body></html>
